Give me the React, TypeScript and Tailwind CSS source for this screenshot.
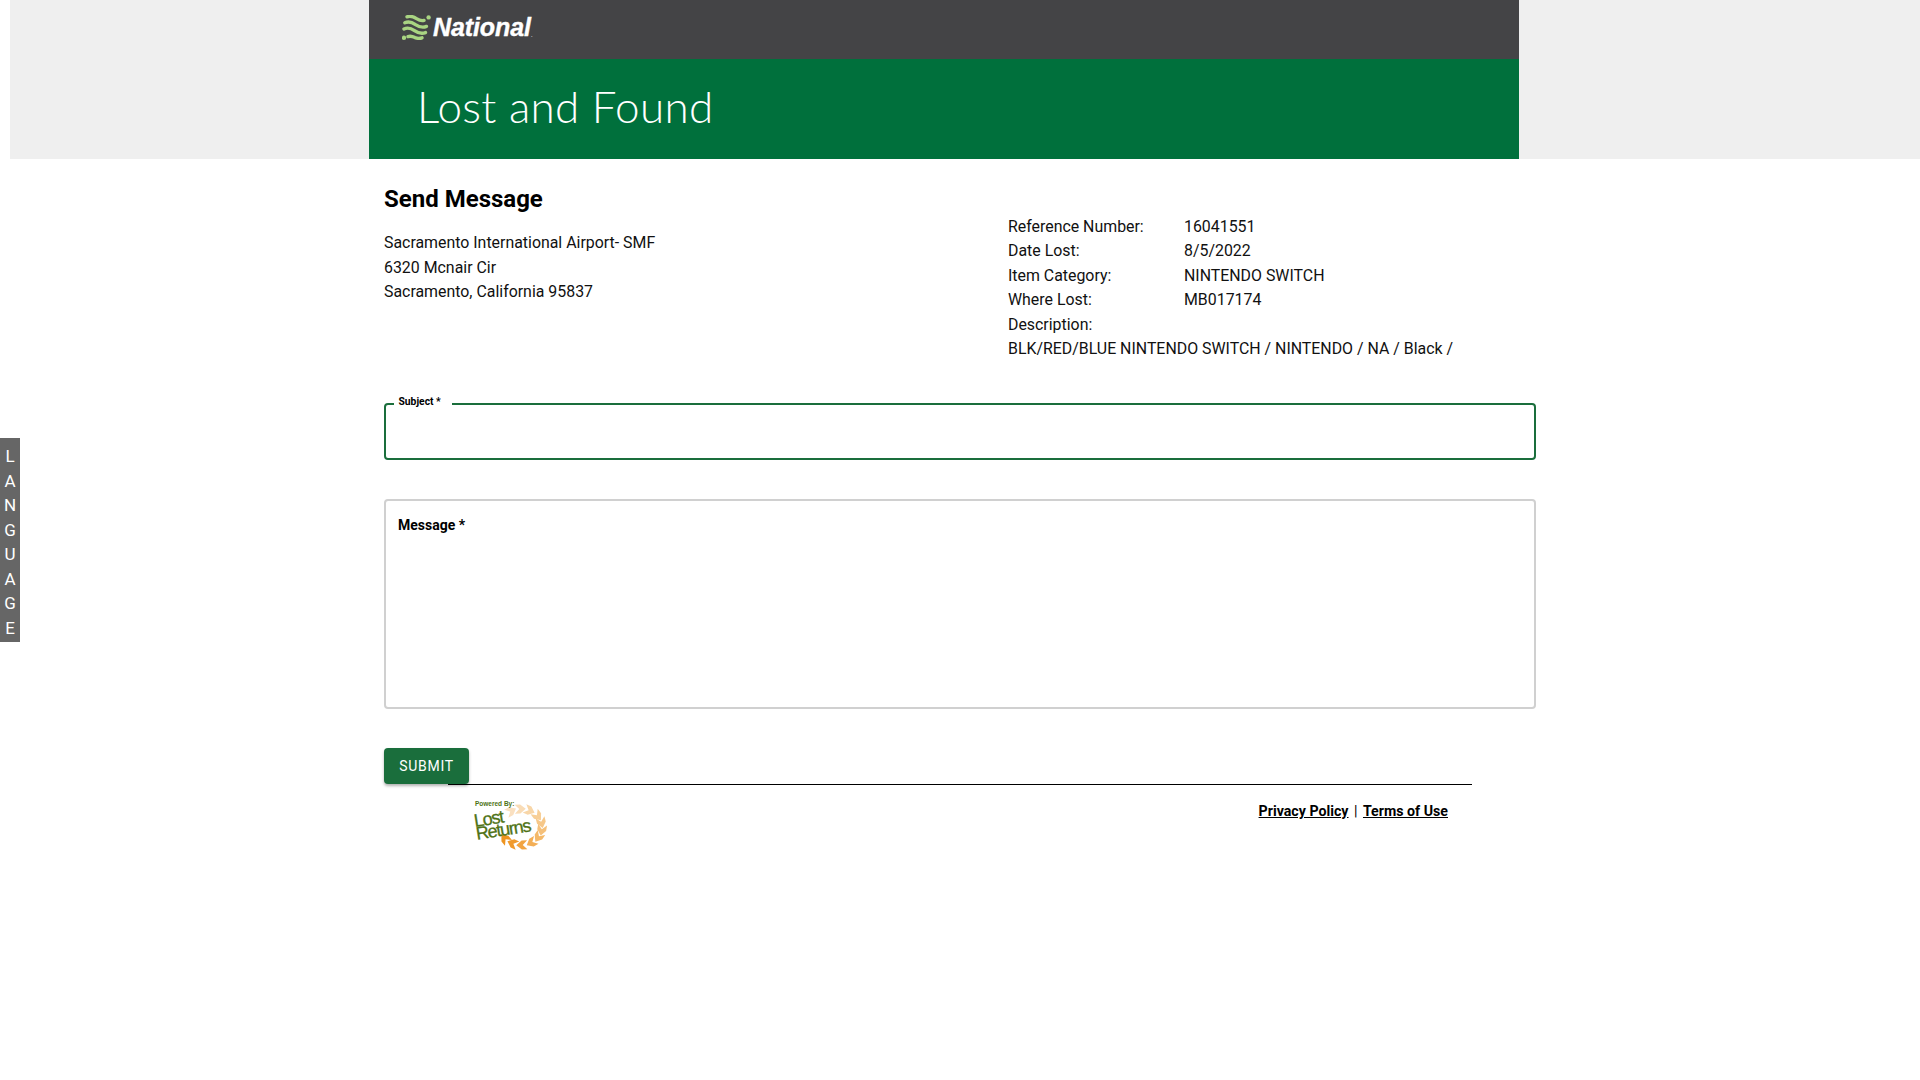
import React from "react";

const roboto = { fontFamily: "Roboto, 'Liberation Sans', sans-serif" };

function NationalMark() {
  return (
    <svg width="30" height="25" viewBox="0 0 30 25" fill="none" className="shrink-0">
      <g stroke="#a9d482" strokeWidth="3.4" strokeLinecap="round" fill="none">
        <path d="M5 1.8 C9 0.5 12 2 14.5 3.6 C17 5.2 19.5 6 22 5.4" />
        <path d="M2.8 7.8 C7 5.8 10.5 7.5 13.5 9.6 C16.5 11.6 20.5 13 24.5 11.4" />
        <path d="M2 14 C6 12 9.5 13.5 12.5 15.6 C15.5 17.7 19.5 19.2 23.5 17.6" />
        <path d="M6 21.6 C9 20.6 11 21.6 13 22.6 C15 23.4 17.5 23.6 20 22.8" />
      </g>
      <circle cx="26.6" cy="2.4" r="2.2" fill="#a9d482" />
      <circle cx="2" cy="22.8" r="2.2" fill="#a9d482" />
    </svg>
  );
}

function Wreath() {
  const petals = [
    { a: -118, c: "#fae0c0" }, { a: -92, c: "#f9dcb6" }, { a: -66, c: "#f8d6a8" }, { a: -38, c: "#f7cf98" },
    { a: -14, c: "#f6c788" }, { a: 10, c: "#f5c07a" }, { a: 34, c: "#f4b96a" }, { a: 60, c: "#f3ae55" },
    { a: 88, c: "#f2a440" }, { a: 114, c: "#f09a2c" }, { a: 140, c: "#ee9420" },
  ];
  return (
    <svg width="72" height="50" viewBox="0 0 72 50" className="absolute left-0 top-0">
      {petals.map((p, i) => {
        const r = (p.a * Math.PI) / 180;
        const cx = 46 + 21 * Math.cos(r);
        const cy = 26 + 18 * Math.sin(r);
        return (
          <path
            key={i}
            transform={`translate(${cx} ${cy}) rotate(${p.a + 90})`}
            d="M-5.5 -4.5 L0 -4.5 L5.5 0 L0 4.5 L-5.5 4.5 L-1 0 Z"
            fill={p.c}
          />
        );
      })}
    </svg>
  );
}

function LostReturns() {
  return (
    <div className="relative h-[50px] w-[72px] font-['Liberation_Sans',sans-serif] text-[#4e7215]">
      <Wreath />
      <span className="absolute left-0 top-[-1px] text-[6.5px] font-bold leading-[8px]">Powered By:</span>
      <div className="absolute left-0 top-[14px] origin-left -rotate-[9deg] text-[18px] leading-[12.5px] tracking-[-1.2px] [-webkit-text-stroke:0.3px_#4e7215]">
        Lost
        <br />
        Returns
      </div>
    </div>
  );
}

const rows: [string, string][] = [
  ["Reference Number:", "16041551"],
  ["Date Lost:", "8/5/2022"],
  ["Item Category:", "NINTENDO SWITCH"],
  ["Where Lost:", "MB017174"],
];

export default function App() {
  return (
    <div className="relative min-h-[1080px] bg-white text-[#111]" style={roboto}>
      <header className="ml-[10px] h-[159px] bg-[#efefef] pl-[359px]">
        <div className="w-[1150px]">
          <div className="flex h-[59px] items-center bg-[#444446] pb-[4px] pl-[33px]">
            <NationalMark />
            <span className="ml-px font-['Liberation_Sans',sans-serif] text-[25px] font-bold italic leading-none tracking-[-0.1px] text-white [-webkit-text-stroke:0.4px_white]">
              National
            </span>
            <span className="mt-[14px] text-[8px] leading-none text-[#cfcfcf]">.</span>
          </div>
          <div className="flex h-[100px] items-center bg-[#00703c] pb-[7px] pl-[48px]">
            <h1 className="font-['Lato',sans-serif] text-[44px] font-light leading-none tracking-[0.3px] text-white">
              Lost and Found
            </h1>
          </div>
        </div>
      </header>

      <main className="ml-[384px] w-[1152px]">
        <div className="flex h-[244px]">
          <div className="w-[624px] pt-[26px]">
            <h2 className="text-[24px] font-bold leading-[28px] text-black">Send Message</h2>
            <div className="mt-[18px] text-[15.9px] leading-[24.5px]">
              <div>Sacramento International Airport- SMF</div>
              <div>6320 Mcnair Cir</div>
              <div>Sacramento, California 95837</div>
            </div>
          </div>
          <div className="pt-[55.7px] text-[15.9px] leading-[24.5px]">
            {rows.map(([k, v]) => (
              <div key={k} className="flex">
                <span className="w-[176px]">{k}</span>
                <span>{v}</span>
              </div>
            ))}
            <div>Description:</div>
            <div>BLK/RED/BLUE NINTENDO SWITCH / NINTENDO / NA / Black /</div>
          </div>
        </div>

        <div className="relative h-[57px] rounded-[4px] border-2 border-[#1a6e3c]">
          <span className="absolute left-[8px] top-[-10px] block w-[58px] bg-white pl-[4.5px] text-[10.3px] font-bold leading-[14px] text-black">
            Subject *
          </span>
          <input aria-label="Subject" className="h-full w-full bg-transparent outline-none" />
        </div>

        <div className="mt-[39px] h-[210px] rounded-[4px] border-2 border-[#d0d0d0] px-[12px] pt-[14px]">
          <span className="block text-[14px] font-bold leading-[20px] text-black">Message *</span>
        </div>

        <button className="mt-[39px] block h-[36px] w-[85px] rounded-[4px] bg-[#1a6e3c] text-[14px] font-normal tracking-[0.7px] text-white shadow-[0_2px_3px_rgba(0,0,0,0.3)]">
          SUBMIT
        </button>
      </main>

      <footer className="ml-[448px] w-[1024px] border-t border-black">
        <div className="flex justify-between pl-[27px] pr-[24px] pt-[16px]">
          <LostReturns />
          <div className="flex h-[20px] items-center gap-[5.5px] text-[14.2px] font-bold leading-[20px] text-black">
            <a className="underline">Privacy Policy</a>
            <span className="font-normal">|</span>
            <a className="underline">Terms of Use</a>
          </div>
        </div>
      </footer>

      <div className="absolute left-0 top-[438px] flex h-[204px] w-[20px] flex-col items-center bg-[#666] pt-[6px] text-[17px] leading-[24.5px] text-white">
        {"LANGUAGE".split("").map((c, i) => (
          <span key={i}>{c}</span>
        ))}
      </div>
    </div>
  );
}
